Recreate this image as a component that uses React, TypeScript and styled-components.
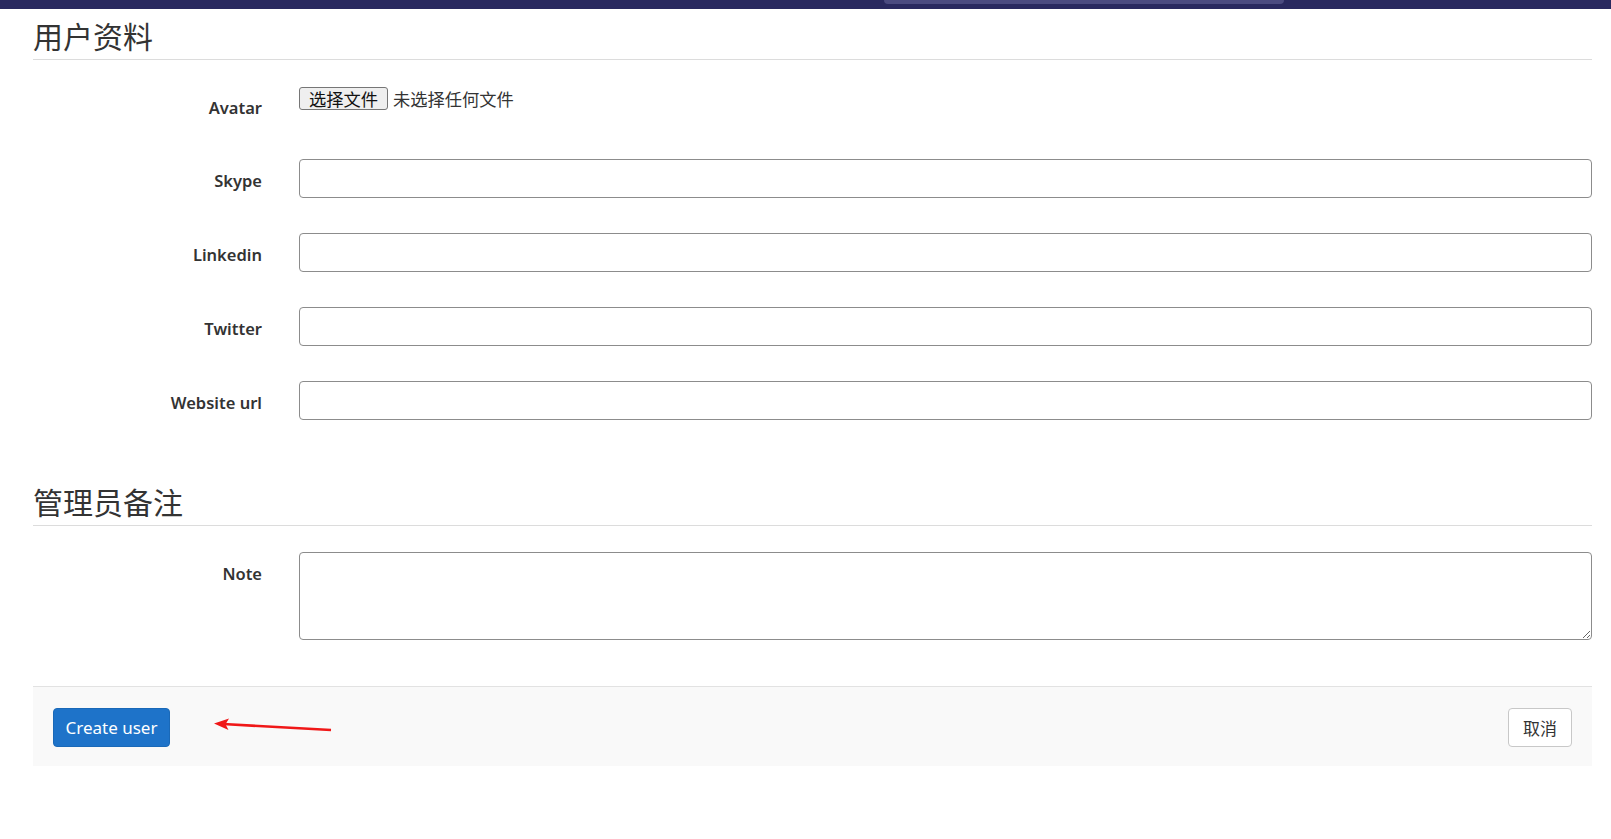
import React from "react";
import styled, { createGlobalStyle } from "styled-components";

const Global = createGlobalStyle`
  html, body { margin: 0; padding: 0; background: #fff; }
  body {
    font-family: "Noto Sans", "Noto Sans CJK SC", sans-serif;
    color: #333;
  }
  * { box-sizing: border-box; }
`;

const TopBar = styled.div`
  height: 9px;
  background: #29295f;
  display: flex;
  padding-left: 884px;
`;

const TopTab = styled.div`
  width: 400px;
  height: 4px;
  background: #4b4b80;
  border-radius: 0 0 6px 6px;
`;

const Page = styled.div`
  padding: 0 19px 0 33px;
`;

const SectionTitle = styled.h3<{ $top: number }>`
  margin: ${(p) => p.$top}px 0 0;
  font-family: "Noto Sans CJK SC", "Noto Sans", sans-serif;
  font-weight: 400;
  font-size: 30px;
  line-height: 38px;
  padding-bottom: 5px;
  border-bottom: 1px solid #dcdcdc;
  color: #333;
`;

const Fields = styled.div`
  padding-top: 26px;
`;

const Row = styled.div<{ $gap: number }>`
  display: flex;
  align-items: flex-start;
  margin-bottom: ${(p) => p.$gap}px;
`;

const Label = styled.label`
  width: 229px;
  margin-right: 37px;
  flex: none;
  text-align: right;
  padding-top: 10px;
  font-size: 16.5px;
  line-height: 24px;
  font-weight: 600;
  color: #333;
`;

const FileWrap = styled.div`
  display: flex;
  align-items: center;
  font-family: "Noto Sans CJK SC", "Noto Sans", sans-serif;
  font-size: 17.25px;
  color: #333;
`;

const FileButton = styled.button`
  height: 23px;
  padding: 0 9px;
  background: #efefef;
  border: 1px solid #767676;
  border-radius: 3px;
  font-family: "Noto Sans CJK SC", "Noto Sans", sans-serif;
  font-size: 17.25px;
  line-height: 21px;
  color: #111;
  margin-right: 5px;
`;

const TextInput = styled.input`
  flex: 1;
  height: 39px;
  border: 1px solid #8c8c8c;
  border-radius: 4px;
  padding: 0 12px;
  font-size: 17px;
  background: #fff;
`;

const NoteArea = styled.textarea`
  flex: 1;
  height: 88px;
  border: 1px solid #8c8c8c;
  border-radius: 4px;
  padding: 8px 12px;
  font-size: 17px;
  resize: vertical;
  background: #fff;
`;

const Footer = styled.div`
  position: relative;
  margin-top: 46px;
  background: #f9f9f9;
  border-top: 1px solid #e2e2e2;
  padding: 21px 20px 19px;
  display: flex;
  justify-content: space-between;
  align-items: center;
`;

const PrimaryButton = styled.button`
  height: 39px;
  width: 117px;
  background: #1e73c9;
  border: 1px solid #1a69b8;
  border-radius: 4px;
  color: #fff;
  font-family: "Noto Sans", sans-serif;
  font-size: 17px;
  padding: 0;
`;

const DefaultButton = styled.button`
  height: 39px;
  width: 64px;
  background: #fff;
  border: 1px solid #c8c8c8;
  border-radius: 4px;
  color: #333;
  font-family: "Noto Sans CJK SC", sans-serif;
  font-size: 17px;
  padding: 0;
`;

const Arrow = styled.svg`
  position: absolute;
  left: 176px;
  top: 34px;
  overflow: visible;
`;

export default function App() {
  return (
    <>
      <Global />
      <TopBar>
        <TopTab />
      </TopBar>
      <Page>
        <SectionTitle $top={7}>用户资料</SectionTitle>
        <Fields>
          <Row $gap={39}>
            <Label>Avatar</Label>
            <FileWrap>
              <FileButton type="button">选择文件</FileButton>
              <span>未选择任何文件</span>
            </FileWrap>
          </Row>
          <Row $gap={35}>
            <Label>Skype</Label>
            <TextInput />
          </Row>
          <Row $gap={35}>
            <Label>Linkedin</Label>
            <TextInput />
          </Row>
          <Row $gap={35}>
            <Label>Twitter</Label>
            <TextInput />
          </Row>
          <Row $gap={0}>
            <Label>Website url</Label>
            <TextInput />
          </Row>
        </Fields>
        <SectionTitle $top={62}>管理员备注</SectionTitle>
        <Fields>
          <Row $gap={0}>
            <Label>Note</Label>
            <NoteArea />
          </Row>
        </Fields>
        <Footer>
          <PrimaryButton type="button">Create user</PrimaryButton>
          <DefaultButton type="button">取消</DefaultButton>
          <Arrow width="130" height="20" viewBox="0 0 130 20">
            <line x1="14" y1="3" x2="122" y2="9" stroke="#f01818" strokeWidth="2.6" />
            <polygon points="5,2.4 20,-2.5 16.5,3.3 19.5,9" fill="#f01818" />
          </Arrow>
        </Footer>
      </Page>
    </>
  );
}
